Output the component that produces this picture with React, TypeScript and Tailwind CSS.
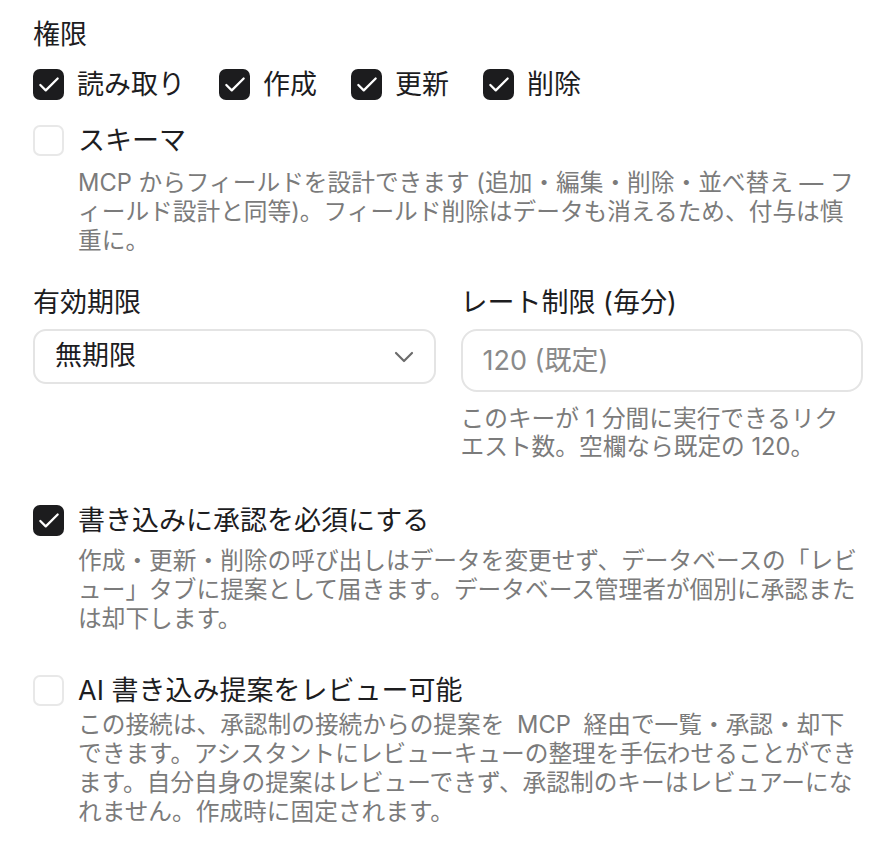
import { Check, ChevronDown } from "lucide-react"

const perms = [
  { name: "読み取り", checked: true },
  { name: "作成", checked: true },
  { name: "更新", checked: true },
  { name: "削除", checked: true },
]

function Box({ checked }: { checked: boolean }) {
  if (checked) {
    return (
      <span className="flex h-[31px] w-[31px] flex-shrink-0 items-center justify-center rounded-[7px] bg-[#1c1c1e]">
        <Check size={26} strokeWidth={2.1} className="text-white" />
      </span>
    )
  }
  return <span className="block h-[31px] w-[31px] flex-shrink-0 rounded-[7px] border-2 border-[#e8e8e8] bg-white" />
}

function Option({
  label,
  desc,
  checked,
  descClass,
  className,
}: {
  label: string
  desc: string
  checked: boolean
  descClass: string
  className: string
}) {
  return (
    <div className={`flex items-start gap-[14px] ${className}`}>
      <Box checked={checked} />
      <div className="min-w-0 flex-1">
        <p className="text-[27px] leading-[31px] text-[#1d1d1f]">{label}</p>
        <p className={`${descClass} text-[23.7px] leading-[29px] text-[#7b7b7b]`}>{desc}</p>
      </div>
    </div>
  )
}

export default function App() {
  return (
    <div className="min-h-screen bg-white px-[33px] pt-[18px] font-['Inter','Noto_Sans_CJK_JP',sans-serif]">
      <div className="w-[830px]">
        <h2 className="text-[27px] leading-[34px] text-[#1d1d1f]">権限</h2>

        <div className="mt-[17px] flex items-center gap-x-[34px]">
          {perms.map((p) => (
            <label key={p.name} className="flex items-center gap-[13px]">
              <Box checked={p.checked} />
              <span className="text-[27px] leading-[31px] text-[#1d1d1f]">{p.name}</span>
            </label>
          ))}
        </div>

        <Option
          className="mt-[25px]"
          checked={false}
          label="スキーマ"
          descClass="mt-[12px]"
          desc="MCP からフィールドを設計できます (追加・編集・削除・並べ替え — フィールド設計と同等)。フィールド削除はデータも消えるため、付与は慎重に。"
        />

        <div className="mt-[31px] grid grid-cols-2 gap-x-[25px]">
          <div>
            <p className="text-[27px] leading-[34px] text-[#1d1d1f]">有効期限</p>
            <button className="mt-[9px] flex h-[55px] w-full items-center justify-between rounded-[13px] border-2 border-[#e4e4e4] bg-white pl-[20px] pr-[14px]">
              <span className="text-[27px] text-[#1d1d1f]">無期限</span>
              <ChevronDown size={32} strokeWidth={1.6} className="text-[#6b6b6b]" />
            </button>
          </div>
          <div>
            <p className="text-[27px] leading-[34px] text-[#1d1d1f]">レート制限 (毎分)</p>
            <input
              placeholder="120 (既定)"
              className="mt-[9px] block h-[63px] w-full rounded-[16px] border-2 border-[#e4e4e4] bg-white px-[20px] text-[27px] text-[#1d1d1f] outline-none placeholder:text-[#8a8a8a]"
            />
            <p className="mt-[13px] pr-[12px] text-[23.7px] leading-[28px] text-[#7b7b7b]">
              このキーが 1 分間に実行できるリクエスト数。空欄なら既定の 120。
            </p>
          </div>
        </div>

        <Option
          className="mt-[44px]"
          checked={true}
          label="書き込みに承認を必須にする"
          descClass="mt-[10px]"
          desc="作成・更新・削除の呼び出しはデータを変更せず、データベースの「レビュー」タブに提案として届きます。データベース管理者が個別に承認または却下します。"
        />

        <Option
          className="mt-[42px]"
          checked={false}
          label="AI 書き込み提案をレビュー可能"
          descClass="mt-[4px] [word-spacing:6px]"
          desc="この接続は、承認制の接続からの提案を MCP 経由で一覧・承認・却下できます。アシスタントにレビューキューの整理を手伝わせることができます。自分自身の提案はレビューできず、承認制のキーはレビュアーになれません。作成時に固定されます。"
        />
      </div>
    </div>
  )
}
